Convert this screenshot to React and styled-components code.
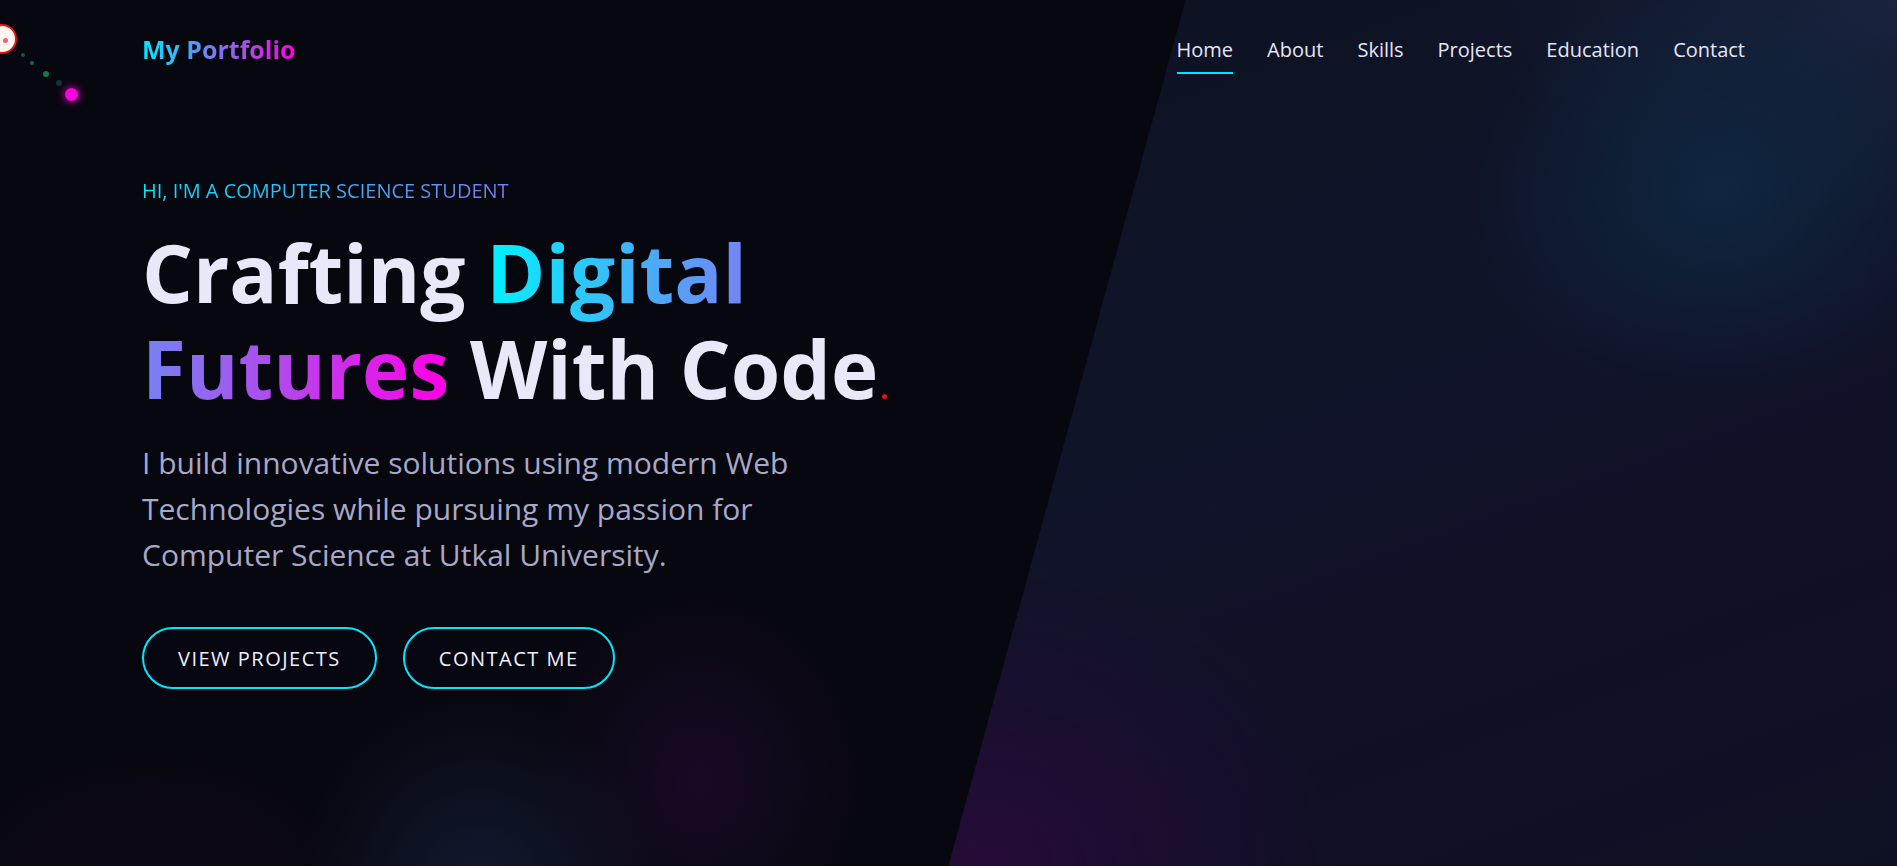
import React from 'react';
import styled, { createGlobalStyle } from 'styled-components';

const GlobalStyle = createGlobalStyle`
  * {
    box-sizing: border-box;
  }

  body {
    margin: 0;
    background: #07070f;
    font-family: 'Open Sans', 'Noto Sans', sans-serif;
    color: #e8e8f8;
  }
`;

const Page = styled.div`
  position: relative;
  min-height: 100vh;
  overflow: hidden;
  background:
    radial-gradient(ellipse 230px 260px at 480px 900px, rgba(22, 32, 58, 0.8), transparent 80%),
    radial-gradient(ellipse 210px 240px at 700px 780px, rgba(36, 12, 52, 0.6), transparent 80%),
    radial-gradient(ellipse 320px 200px at 150px 880px, rgba(26, 10, 34, 0.4), transparent 70%),
    #07070f;
`;

/* slanted panel behind the right half */
const SidePanel = styled.div`
  position: absolute;
  top: 0;
  right: 0;
  width: 50%;
  height: 100%;
  clip-path: polygon(25% 0, 100% 0, 100% 100%, 0 100%);
  background:
    radial-gradient(ellipse 300px 240px at 81% 22%, rgba(14, 44, 70, 0.75), transparent 85%),
    radial-gradient(ellipse 460px 400px at 4% 100%, rgba(46, 10, 64, 0.7), transparent 75%),
    radial-gradient(ellipse 560px 300px at 100% 0%, rgba(28, 42, 72, 0.7), transparent 75%),
    linear-gradient(160deg, #0d1322 0%, #10142a 45%, #110f26 75%, #0e1124 100%);
  z-index: 0;
`;

const CursorRing = styled.div`
  position: absolute;
  left: -13px;
  top: 24px;
  width: 30px;
  height: 30px;
  border-radius: 50%;
  background: #fbf6ee;
  border: 2px solid #e8141e;
  z-index: 5;

  &::after {
    content: '';
    position: absolute;
    left: 14px;
    top: 12px;
    width: 5px;
    height: 5px;
    border-radius: 50%;
    background: #ec5d8a;
  }
`;

const TrailDot = styled.span`
  position: absolute;
  left: ${p => p.$x - p.$size / 2}px;
  top: ${p => p.$y - p.$size / 2}px;
  width: ${p => p.$size}px;
  height: ${p => p.$size}px;
  border-radius: 50%;
  background: ${p => p.$color};
  box-shadow: ${p => (p.$glow ? `0 0 10px ${p.$color}` : 'none')};
  z-index: 5;
`;

const Header = styled.header`
  position: relative;
  z-index: 2;
  height: 98px;
  display: flex;
  align-items: center;
  justify-content: space-between;
  padding: 0 152px 0 142px;
`;

const Logo = styled.a`
  font-size: 25px;
  font-weight: 700;
  background: linear-gradient(90deg, #00e8ff, #ff00e0);
  -webkit-background-clip: text;
  background-clip: text;
  color: transparent;
  text-decoration: none;
`;

const NavList = styled.nav`
  display: flex;
  gap: 34px;
`;

const NavLink = styled.a`
  position: relative;
  font-size: 20px;
  color: #e6e6f6;
  text-decoration: none;

  &::after {
    content: '';
    position: absolute;
    left: 0;
    bottom: -11px;
    height: 2px;
    width: ${p => (p.$active ? '100%' : '0')};
    background: #00e8ff;
  }
`;

const Hero = styled.section`
  position: relative;
  z-index: 2;
  padding: 79px 0 0 142px;
  max-width: 942px;
`;

const Eyebrow = styled.p`
  margin: 0 0 20px;
  font-size: 20px;
  line-height: 27px;
  text-transform: uppercase;
  background: linear-gradient(90deg, #00e8ff, #ff00e0);
  -webkit-background-clip: text;
  background-clip: text;
  color: transparent;
`;

const Title = styled.h1`
  margin: 0;
  font-size: 80px;
  font-weight: 700;
  line-height: 1.2;
  color: #e8e8f8;
`;

const Highlight = styled.span`
  background: linear-gradient(90deg, #00f2ff, #ff00e6);
  -webkit-background-clip: text;
  background-clip: text;
  color: transparent;
`;

const RedDot = styled.span`
  display: inline-block;
  width: 5px;
  height: 5px;
  margin-left: 4px;
  border-radius: 50%;
  background: #e8101c;
`;

const Lead = styled.p`
  margin: 24px 0 0;
  max-width: 700px;
  font-size: 30px;
  font-weight: 400;
  line-height: 46px;
  color: #a8a8c8;
`;

const Actions = styled.div`
  display: flex;
  gap: 26px;
  margin-top: 49px;
`;

const Button = styled.a`
  display: inline-flex;
  align-items: center;
  justify-content: center;
  height: 62px;
  padding: 0 34px;
  border: 2px solid #00e8ff;
  border-radius: 31px;
  background: rgba(8, 8, 20, 0.6);
  color: #f0f0ff;
  font-size: 20px;
  font-weight: 500;
  letter-spacing: 1.5px;
  text-transform: uppercase;
  text-decoration: none;
`;

const links = ['Home', 'About', 'Skills', 'Projects', 'Education', 'Contact'];

const trail = [
  { x: 23, y: 55, size: 4, color: '#0b5a3c' },
  { x: 32, y: 63, size: 4, color: '#0c6a46' },
  { x: 46, y: 74, size: 6, color: '#0e7a50' },
  { x: 59, y: 83, size: 6, color: '#0d3631' },
  { x: 71, y: 94, size: 13, color: '#ff00e0', glow: true },
];

const App = () => {
  return (
    <Page>
      <GlobalStyle />
      <SidePanel />
      <CursorRing />
      {trail.map((d, i) => (
        <TrailDot key={i} $x={d.x} $y={d.y} $size={d.size} $color={d.color} $glow={d.glow} />
      ))}

      <Header>
        <Logo href="#">My Portfolio</Logo>
        <NavList>
          {links.map(link => (
            <NavLink key={link} href="#" $active={link === 'Home'}>
              {link}
            </NavLink>
          ))}
        </NavList>
      </Header>

      <Hero>
        <Eyebrow>Hi, I'm a Computer Science Student</Eyebrow>
        <Title>
          Crafting <Highlight>Digital Futures</Highlight> With Code<RedDot />
        </Title>
        <Lead>
          I build innovative solutions using modern Web Technologies while pursuing my
          passion for Computer Science at Utkal University.
        </Lead>
        <Actions>
          <Button href="#">View Projects</Button>
          <Button href="#">Contact Me</Button>
        </Actions>
      </Hero>
    </Page>
  );
};

export default App;
